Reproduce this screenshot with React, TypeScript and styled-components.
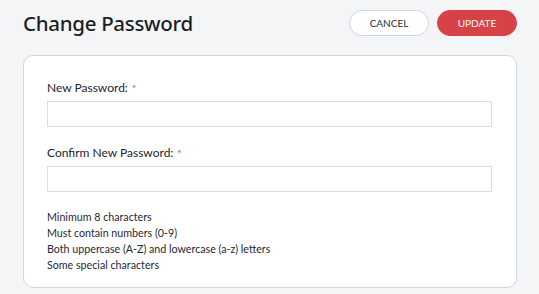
import React, { useState } from 'react';
import styled, { createGlobalStyle } from 'styled-components';

const GlobalStyle = createGlobalStyle`
  html, body {
    margin: 0;
    padding: 0;
    background: #f4f5f7;
  }
  * {
    box-sizing: border-box;
  }
`;

const Page = styled.div`
  width: 539px;
  min-height: 294px;
  padding: 10px 22px 0 23px;
  font-family: Lato, 'Liberation Sans', sans-serif;
`;

const Header = styled.div`
  display: flex;
  align-items: center;
  justify-content: space-between;
  height: 26px;
  margin-bottom: 19px;
`;

const Title = styled.h1`
  margin: 0;
  font-family: 'Noto Sans', 'Open Sans', sans-serif;
  font-size: 20.5px;
  font-weight: 500;
  color: #1c1f26;
  letter-spacing: -0.3px;
`;

const Actions = styled.div`
  display: flex;
  gap: 8px;
`;

const PillButton = styled.button<{ primary?: boolean }>`
  width: 80px;
  height: 26px;
  border-radius: 13px;
  font-family: Lato, 'Liberation Sans', sans-serif;
  font-size: 10px;
  text-transform: uppercase;
  cursor: pointer;
  border: 1px solid ${props => props.primary ? '#d64246' : '#cdd5e6'};
  background: ${props => props.primary ? '#d64246' : '#ffffff'};
  color: ${props => props.primary ? '#ffffff' : '#2a2d36'};
`;

const Card = styled.div`
  width: 494px;
  background: #ffffff;
  border: 1px solid #cfd6e5;
  border-radius: 10px;
  padding: 24px 24px 14px 23px;
`;

const Field = styled.div`
  display: flex;
  flex-direction: column;
  margin-bottom: 18px;
`;

const Label = styled.label`
  font-size: 12px;
  line-height: 16px;
  color: #222531;
  margin-bottom: 5px;
`;

const Required = styled.span`
  color: #d64246;
  font-size: 10px;
  vertical-align: top;
  margin-left: 4px;
`;

const Input = styled.input`
  width: 445px;
  height: 26px;
  border: 1px solid #dcdbe9;
  border-radius: 0;
  padding: 0 8px;
  font-family: Lato, 'Liberation Sans', sans-serif;
  font-size: 12px;
  outline: none;
`;

const Rules = styled.ul`
  list-style: none;
  margin: -1px 0 0;
  padding: 0;
`;

const Rule = styled.li`
  font-size: 10.7px;
  line-height: 16px;
  color: #262935;
`;

const rules = [
  'Minimum 8 characters',
  'Must contain numbers (0-9)',
  'Both uppercase (A-Z) and lowercase (a-z) letters',
  'Some special characters',
];

const App: React.FC = () => {
  const [password, setPassword] = useState('');
  const [confirm, setConfirm] = useState('');

  return (
    <>
      <GlobalStyle />
      <Page>
        <Header>
          <Title>Change Password</Title>
          <Actions>
            <PillButton>Cancel</PillButton>
            <PillButton primary>Update</PillButton>
          </Actions>
        </Header>
        <Card>
          <Field>
            <Label>
              New Password:<Required>*</Required>
            </Label>
            <Input type="password" value={password} onChange={e => setPassword(e.target.value)} />
          </Field>
          <Field>
            <Label>
              Confirm New Password:<Required>*</Required>
            </Label>
            <Input type="password" value={confirm} onChange={e => setConfirm(e.target.value)} />
          </Field>
          <Rules>
            {rules.map(rule => (
              <Rule key={rule}>{rule}</Rule>
            ))}
          </Rules>
        </Card>
      </Page>
    </>
  );
};

export default App;
